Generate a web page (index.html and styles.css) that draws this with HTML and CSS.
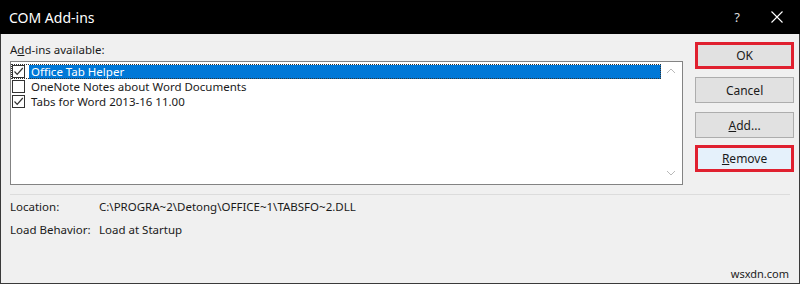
FILE: index.html
```html
<!DOCTYPE html>
<html>
<head>
<meta charset="utf-8">
<link rel="stylesheet" href="styles.css">
</head>
<body>
<div class="dialog">
  <div class="titlebar">
    <span class="title">COM Add-ins</span>
    <div class="title-controls">
      <span class="help">?</span>
      <svg class="close" width="12" height="12" viewBox="0 0 12 12"><path d="M0.5 0.5 L11.5 11.5 M11.5 0.5 L0.5 11.5" stroke="#fff" stroke-width="1.1" fill="none"/></svg>
    </div>
  </div>
  <div class="main">
    <div class="left">
      <div class="label">A<u>d</u>d-ins available:</div>
      <div class="listbox">
        <div class="items">
          <div class="item selected">
            <span class="cb checked"><svg width="11" height="11" viewBox="0 0 11 11"><path d="M1.5 5.5 L4.2 8.3 L9.8 2" stroke="#333" stroke-width="1.2" fill="none"/></svg></span>
            <span class="text">Office Tab Helper</span>
          </div>
          <div class="item">
            <span class="cb"></span>
            <span class="text">OneNote Notes about Word Documents</span>
          </div>
          <div class="item">
            <span class="cb checked"><svg width="11" height="11" viewBox="0 0 11 11"><path d="M1.5 5.5 L4.2 8.3 L9.8 2" stroke="#333" stroke-width="1.2" fill="none"/></svg></span>
            <span class="text">Tabs for Word 2013-16 11.00</span>
          </div>
        </div>
        <div class="scroll">
          <svg width="10" height="6" viewBox="0 0 10 6"><path d="M1 5 L5 1 L9 5" stroke="#b9b9b9" stroke-width="1" fill="none"/></svg>
          <svg width="10" height="6" viewBox="0 0 10 6"><path d="M1 1 L5 5 L9 1" stroke="#b9b9b9" stroke-width="1" fill="none"/></svg>
        </div>
      </div>
    </div>
    <div class="buttons">
      <div class="btn highlight">OK</div>
      <div class="btn">Cancel</div>
      <div class="btn spaced"><u>A</u>dd...</div>
      <div class="btn highlight hover"><u>R</u>emove</div>
    </div>
  </div>
  <div class="separator"></div>
  <div class="info">
    <div class="info-row"><span class="info-label">Location:</span><span>C:\PROGRA~2\Detong\OFFICE~1\TABSFO~2.DLL</span></div>
    <div class="info-row"><span class="info-label">Load Behavior:</span><span>Load at Startup</span></div>
  </div>
  <div class="watermark">wsxdn.com</div>
</div>
</body>
</html>
```
FILE: styles.css
```css
* { box-sizing: border-box; }
html, body { margin: 0; padding: 0; }
body {
  width: 800px;
  height: 284px;
  overflow: hidden;
  font-family: "Noto Sans", "Open Sans", sans-serif;
  font-size: 11.5px;
  color: #1a1a1a;
}
.dialog {
  width: 800px;
  height: 284px;
  background: #f0f0f0;
  border: 1px solid #3a3a3a;
  border-top: none;
  display: flex;
  flex-direction: column;
  position: relative;
}
.titlebar {
  height: 34px;
  background: #000;
  color: #fff;
  display: flex;
  align-items: center;
  justify-content: space-between;
  padding: 0 17px 0 9px;
  margin: 0 -1px;
}
.title { font-size: 14px; }
.title-controls { display: flex; align-items: center; gap: 31px; }
.help { font-size: 13px; color: #ddd; }
.main {
  display: flex;
  padding: 8px 5px 0 9px;
}
.left { width: 674px; display: flex; flex-direction: column; }
.label { height: 19px; line-height: 16px; }
.listbox {
  height: 124px;
  background: #fff;
  border: 1px solid #838383;
  display: flex;
}
.items { flex: 1; padding-top: 1px; }
.item {
  height: 15px;
  display: flex;
  align-items: center;
  padding-left: 1px;
}
.item .text { line-height: 15px; padding: 0 2px; }
.item.selected {
  outline: 1px dotted #333;
  outline-offset: -1px;
  margin-top: 1px;
}
.item.selected .text {
  flex: 1;
  background: #0078d7;
  color: #fff;
  height: 14px;
  line-height: 14px;
}
.cb {
  width: 13px;
  height: 13px;
  border: 1px solid #333;
  background: #fff;
  margin-right: 4px;
  display: flex;
  align-items: center;
  justify-content: center;
  flex: none;
}
.scroll {
  width: 21px;
  display: flex;
  flex-direction: column;
  justify-content: space-between;
  align-items: center;
  padding: 6px 2px 8px 0;
}
.buttons {
  margin-left: 12px;
  width: 99px;
  display: flex;
  flex-direction: column;
  font-size: 12px;
}
.btn {
  height: 26px;
  background: #e1e1e1;
  border: 1px solid #adadad;
  display: flex;
  align-items: center;
  justify-content: center;
  margin-bottom: 9px;
}
.btn.highlight {
  border: 3px solid #e0202f;
  height: 27px;
  margin-bottom: 8px;
}
.btn.spaced { margin-bottom: 7px; }
.btn.hover { background: #e5f1fb; }
.separator {
  height: 1px;
  background: #dcdcdc;
  margin: 9px 9px 0 9px;
}
.info { padding: 0 0 0 9px; }
.info-row { height: 23px; display: flex; align-items: center; }
.info-label { width: 89px; flex: none; }
.watermark {
  position: absolute;
  right: 10px;
  bottom: 2px;
  font-size: 11px;
  color: #222;
}
```
